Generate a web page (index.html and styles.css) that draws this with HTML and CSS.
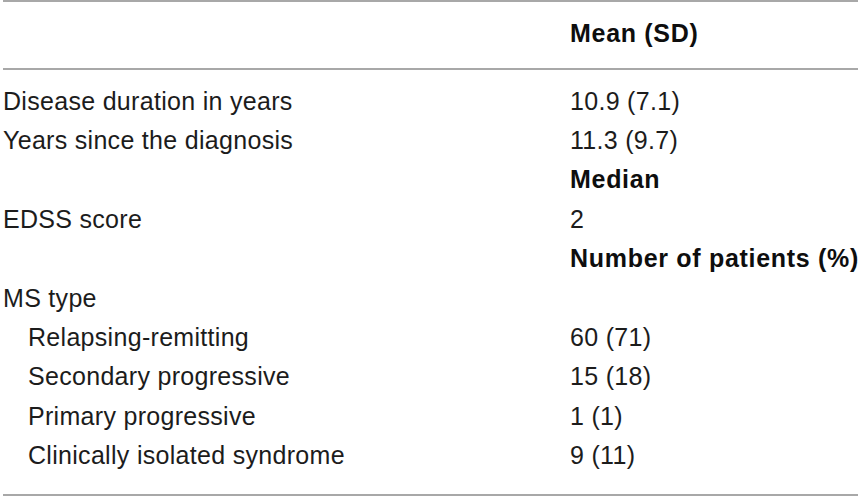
FILE: index.html
```html
<!DOCTYPE html>
<html lang="en">
<head>
<meta charset="utf-8">
<title>MS patient characteristics</title>
<link rel="stylesheet" href="styles.css">
</head>
<body>
<div class="tbl">
  <div class="head">
    <span class="label"></span>
    <span class="value bold">Mean (SD)</span>
  </div>
  <div class="body">
    <div class="row"><span class="label">Disease duration in years</span><span class="value">10.9 (7.1)</span></div>
    <div class="row"><span class="label">Years since the diagnosis</span><span class="value">11.3 (9.7)</span></div>
    <div class="row"><span class="label"></span><span class="value bold">Median</span></div>
    <div class="row"><span class="label">EDSS score</span><span class="value">2</span></div>
    <div class="row"><span class="label"></span><span class="value bold">Number of patients (%)</span></div>
    <div class="row"><span class="label">MS type</span><span class="value"></span></div>
    <div class="row"><span class="label indent">Relapsing-remitting</span><span class="value">60 (71)</span></div>
    <div class="row"><span class="label indent">Secondary progressive</span><span class="value">15 (18)</span></div>
    <div class="row"><span class="label indent">Primary progressive</span><span class="value">1 (1)</span></div>
    <div class="row"><span class="label indent">Clinically isolated syndrome</span><span class="value">9 (11)</span></div>
  </div>
</div>
</body>
</html>
```

FILE: styles.css
```css
html, body {
  margin: 0;
  padding: 0;
  background: #ffffff;
}

.tbl {
  margin-left: 3px;
  width: 855px;
  border-top: 2px solid #a8a8a8;
  border-bottom: 2px solid #a8a8a8;
  font-family: "Liberation Sans", Arial, Helvetica, sans-serif;
  font-size: 25px;
  color: #1c1c1c;
  letter-spacing: 0.3px;
  white-space: nowrap;
}

.head {
  display: grid;
  grid-template-columns: 567px 1fr;
  height: 68px;
  box-sizing: border-box;
  padding-top: 17px;
  line-height: 28px;
  border-bottom: 2px solid #a8a8a8;
}

.body {
  padding: 11px 0 19px;
  display: grid;
  grid-auto-rows: 39.4px;
}

.row {
  display: grid;
  grid-template-columns: 567px 1fr;
  align-items: center;
  line-height: 28px;
}

.value {
  overflow: visible;
}

.label.indent {
  padding-left: 25px;
}

.bold {
  font-weight: bold;
  letter-spacing: 0.7px;
  color: #0e0e0e;
}
```
